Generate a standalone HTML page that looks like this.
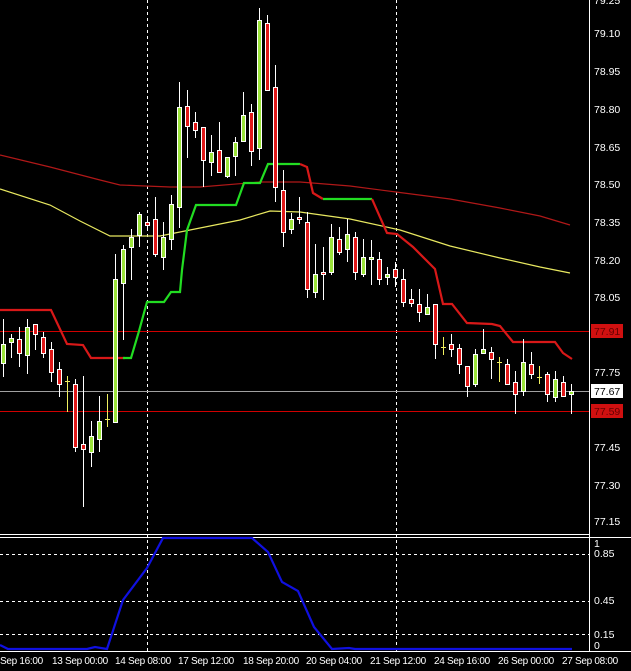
<!DOCTYPE html>
<html><head><meta charset="utf-8"><style>
html,body{margin:0;padding:0;background:#000;width:631px;height:671px;overflow:hidden}
svg{display:block}
text{font-family:"Liberation Sans",sans-serif;font-size:10.5px;fill:#fff}
.t{font-size:10px;letter-spacing:-0.3px}
</style></head><body>
<svg id="s" width="631" height="671" viewBox="0 0 631 671" xmlns="http://www.w3.org/2000/svg" shape-rendering="crispEdges">
<rect width="631" height="671" fill="#000"/>
<line x1="147.5" y1="0" x2="147.5" y2="651" stroke="#fff" stroke-dasharray="3,3"/>
<line x1="396.5" y1="0" x2="396.5" y2="651" stroke="#fff" stroke-dasharray="3,3"/>
<polyline fill="none" stroke="#b01818" stroke-width="1.2" shape-rendering="auto" points="0,155 50,167 100,180 120,185 170,187 200,187 260,182 300,182 350,186 396,192 450,199 500,208 540,216 570,225"/>
<polyline fill="none" stroke="#e8e860" stroke-width="1.2" shape-rendering="auto" points="0,189 50,205 80,221 110,236 160,236 190,230 240,220 270,211 300,212 350,219 400,230 450,246 500,258 540,267 570,273"/>
<line x1="0" y1="331.5" x2="589" y2="331.5" stroke="#d00000"/>
<line x1="0" y1="391.5" x2="589" y2="391.5" stroke="#a0a0a0"/>
<line x1="0" y1="411.5" x2="589" y2="411.5" stroke="#d00000"/>
<polyline fill="none" stroke="#d81818" stroke-width="2.2" shape-rendering="auto" points="0,310 51,310 67,344 83,345 91,358 125,358"/>
<polyline fill="none" stroke="#22dd22" stroke-width="2.2" shape-rendering="auto" points="123,358 131,358 139,331 147,302 164,302 171,292 180,292 182,270 187,230 196,205 236,205 244,183 260,183 268,164 300,164"/>
<polyline fill="none" stroke="#d81818" stroke-width="2.2" shape-rendering="auto" points="300,164 307,167 313,193 323,199"/>
<polyline fill="none" stroke="#22dd22" stroke-width="2.2" shape-rendering="auto" points="323,199 372,199"/>
<polyline fill="none" stroke="#d81818" stroke-width="2.2" shape-rendering="auto" points="372,199 387,233 397,234 413,247 435,269 443,304 452,304 467,323 492,324 500,326 513,342 555,342 563,353 572,359"/>
<g id="c"></g>
<line x1="589.5" y1="0" x2="589.5" y2="651" stroke="#fff"/>
<line x1="0" y1="534.5" x2="589" y2="534.5" stroke="#fff"/>
<line x1="0" y1="537.5" x2="631" y2="537.5" stroke="#fff"/>
<line x1="0" y1="651.5" x2="631" y2="651.5" stroke="#fff"/>
<line x1="0" y1="554.5" x2="589" y2="554.5" stroke="#fff" stroke-dasharray="3,3"/>
<line x1="0" y1="601.5" x2="589" y2="601.5" stroke="#fff" stroke-dasharray="3,3"/>
<line x1="0" y1="634.5" x2="589" y2="634.5" stroke="#fff" stroke-dasharray="3,3"/>
<polyline fill="none" stroke="#1010e0" stroke-width="2.2" shape-rendering="auto" points="0,645 8,649 87,649 95,647 107,649 123,600 147,568 163,538 252,538 268,552 282,582 298,591 314,627 332,649 349,648 355,649 572,649"/>
<g>
<text x="594" y="4">79.25</text>
<text x="594" y="37">79.10</text>
<text x="594" y="75">78.95</text>
<text x="594" y="113">78.80</text>
<text x="594" y="151">78.65</text>
<text x="594" y="188">78.50</text>
<text x="594" y="226">78.35</text>
<text x="594" y="264">78.20</text>
<text x="594" y="301">78.05</text>
<text x="594" y="376">77.75</text>
<text x="594" y="451">77.45</text>
<text x="594" y="489">77.30</text>
<text x="594" y="525">77.15</text>
</g>
<rect x="591" y="324" width="32" height="14" fill="#d01010"/>
<text x="594" y="335" style="fill:#600">77.91</text>
<rect x="591" y="384" width="32" height="14" fill="#fff"/>
<text x="594" y="395" style="fill:#000">77.67</text>
<rect x="591" y="404" width="32" height="14" fill="#d01010"/>
<text x="594" y="415" style="fill:#600">77.59</text>
<text x="594" y="547">1</text>
<text x="594" y="557">0.85</text>
<text x="594" y="604">0.45</text>
<text x="594" y="638">0.15</text>
<text x="594" y="649">0</text>
<g class="t">
<text class="t" x="0" y="664">Sep 16:00</text>
<text class="t" x="52" y="664">13 Sep 00:00</text>
<text class="t" x="115" y="664">14 Sep 08:00</text>
<text class="t" x="178" y="664">17 Sep 12:00</text>
<text class="t" x="243" y="664">18 Sep 20:00</text>
<text class="t" x="306" y="664">20 Sep 04:00</text>
<text class="t" x="370" y="664">21 Sep 12:00</text>
<text class="t" x="434" y="664">24 Sep 16:00</text>
<text class="t" x="498" y="664">26 Sep 00:00</text>
<text class="t" x="562" y="664">27 Sep 08:00</text>
</g>
</svg>
<script>
var d=[
[3,'g',344,363,319,377],[11,'g',338,342,334,358],[19,'r',339,353,327,367],[27,'g',327,355,319,374],
[35,'r',324,334,324,350],[43,'r',337,353,332,358],[51,'r',349,372,342,382],[59,'r',369,384,362,397],
[67,'y',381,381,376,412],[75,'r',384,447,379,452],[83,'r',444,449,376,507],[91,'g',436,452,421,467],
[99,'g',421,439,396,452],[107,'y',419,419,394,427],[115,'g',279,422,254,422],[123,'g',249,283,245,340],
[131,'g',237,247,229,280],[139,'g',214,235,212,247],[147,'d',222,225,218,228],[155,'r',219,254,197,257],
[163,'g',237,257,222,270],[171,'g',204,239,195,250],[179,'g',107,207,82,228],[187,'r',106,126,90,158],
[195,'r',122,130,112,138],[203,'r',127,160,127,187],[211,'g',152,162,135,176],[219,'r',150,172,122,172],
[227,'g',157,176,157,178],[235,'g',142,156,137,176],[243,'g',115,141,92,142],[251,'r',112,151,104,166],
[259,'g',20,148,8,160],[267,'r',23,90,15,90],[275,'r',87,187,65,202],[283,'r',190,232,170,247],
[291,'g',219,229,213,234],[299,'d',217,219,197,224],[307,'r',222,289,212,298],[315,'g',274,292,244,298],
[323,'d',272,274,247,300],[331,'g',237,272,224,275],[339,'r',239,252,227,255],[347,'g',234,249,219,262],
[355,'r',237,272,232,280],[363,'g',257,274,239,277],[371,'g',257,259,240,285],[379,'r',259,279,252,285],
[387,'g',274,277,267,285],[395,'r',269,277,262,287],[403,'r',279,302,269,307],[411,'r',299,303,289,307],
[419,'r',304,312,289,322],[427,'g',307,314,294,314],[435,'r',304,344,304,359],[443,'y',347,347,337,355],
[451,'r',344,349,334,357],[459,'r',348,364,344,374],[467,'r',366,386,366,397],[475,'g',354,384,349,387],
[483,'g',349,353,329,354],[491,'r',352,359,347,379],[499,'y',362,362,357,382],[507,'r',364,384,359,384],
[515,'r',382,394,371,414],[523,'g',362,391,339,396],[531,'r',364,374,352,379],[539,'y',377,377,366,384],
[547,'r',374,394,372,402],[555,'g',379,397,371,402],[563,'r',382,396,376,397],[571,'g',391,394,384,414]];
var g=document.getElementById('c'),h='';
d.forEach(function(c){var x=c[0],t=c[1];
if(t=='y'){h+='<line x1="'+(x+.5)+'" y1="'+c[4]+'" x2="'+(x+.5)+'" y2="'+c[5]+'" stroke="#f0f060"/><line x1="'+(x-2)+'" y1="'+(c[2]+.5)+'" x2="'+(x+3)+'" y2="'+(c[2]+.5)+'" stroke="#f0f060"/>';return;}
h+='<line x1="'+(x+.5)+'" y1="'+c[4]+'" x2="'+(x+.5)+'" y2="'+c[5]+'" stroke="#fff"/>';
var f=t=='g'?'#9be33a':'#e01818';
var hh=Math.max(c[3]-c[2],2);
h+='<rect x="'+(x-1.5)+'" y="'+(c[2]+.5)+'" width="4" height="'+hh+'" fill="'+f+'" stroke="#fff"/>';});
g.innerHTML=h;
</script>
</body></html>
